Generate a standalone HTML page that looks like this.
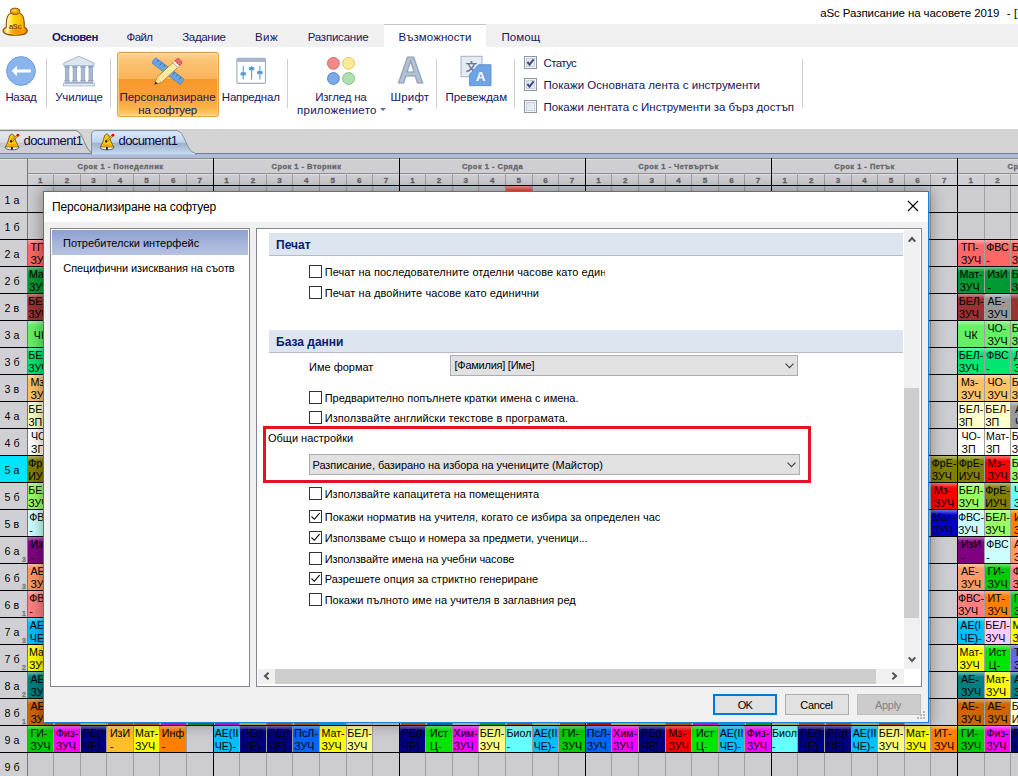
<!DOCTYPE html>
<html lang="bg"><head><meta charset="utf-8"><title>aSc Разписание на часовете 2019</title>
<style>
*{box-sizing:border-box;margin:0;padding:0}
html,body{width:1018px;height:776px;overflow:hidden;background:#fff}
body{position:relative;font-family:"Liberation Sans",sans-serif;font-size:11px;color:#000}
.a{position:absolute}
.t{position:absolute;white-space:nowrap;line-height:1}
/* ribbon */
#tabstrip{left:0;top:24px;width:1018px;height:23px;background:#f0f0f0}
#acttab{left:384px;top:24px;width:102px;height:23px;background:#fff;border-top:1px solid #c4c4c4}
.rt{position:absolute;top:31px;font-size:11.5px;color:#18185e;white-space:nowrap;line-height:13px}
.rl{position:absolute;font-size:11.5px;color:#16165c;white-space:nowrap;line-height:13px;text-align:center}
.sep{position:absolute;top:59px;width:1px;height:49px;background:#cdcdcd}
.rcb{position:absolute;left:524px;width:13px;height:13px;border:1px solid #8a97ab;background:linear-gradient(135deg,#d9dee8,#f6f7fa);box-shadow:inset 0 0 0 1px #f4f5f8,inset 0 0 0 2px #c9d0dc}
/* doc tabs */
#docbar{left:0;top:129px;width:1018px;height:29px;background:#d4d4d4}
/* grid */
#grid{left:0;top:158px;width:1018px;height:618px;background:#cdcdd1;overflow:hidden}
.hl{position:absolute;left:0;width:1018px;height:1px;background:#000}
.vl{position:absolute;top:15px;width:1px;height:603px;background:#a0a0a0}
.vd{position:absolute;top:0;width:1px;height:618px;background:#000}
.rh{position:absolute;left:0;width:27px;height:26px;overflow:hidden;background:#d0d0d4;font-size:10.67px;line-height:28px;padding-left:4.6px;white-space:nowrap;color:#000}
.rh i{position:absolute;right:1px;bottom:0;font-style:normal;font-size:7px;line-height:7px;color:#77777b;font-weight:bold;-webkit-text-stroke:.3px #77777b}
.c{position:absolute;height:26px;font-size:10.67px;line-height:13px;text-align:center;white-space:nowrap;overflow:hidden;color:#000;padding-top:1px}
.c span{display:inline-block;text-align:left}
.dn{position:absolute;top:4px;font-size:7.5px;font-weight:bold;color:#68686c;-webkit-text-stroke:.35px #68686c;white-space:nowrap;line-height:9px;text-align:center;width:187px}
.pn{position:absolute;top:19px;font-size:8px;font-weight:bold;color:#66666a;-webkit-text-stroke:.35px #66666a;white-space:nowrap;line-height:8px;text-align:center;width:26px}
/* dialog */
#dlg{left:43px;top:191px;width:886px;height:532px;background:#f0f0f0;border:1px solid #1883d7;box-shadow:0 0 14px 2px rgba(0,0,0,.32)}
#dtitle{left:0;top:0;width:884px;height:30px;background:#fff}
.pane{position:absolute;background:#fff;border:1px solid #828790}
.sh{position:absolute;left:269px;width:634px;height:23px;background:#dde6f0;border-bottom:1px solid #b8bcc2;font-weight:bold;color:#0c1a6b;font-size:12px;line-height:24px;padding-left:7px;white-space:nowrap}
.cb{position:absolute;left:309px;width:13px;height:13px;border:1px solid #333;background:#fff}
.cl{position:absolute;left:324.7px;font-size:11px;line-height:13px;white-space:nowrap;color:#000}
.combo{position:absolute;height:21px;background:#e1e1e1;border:1px solid #adadad;font-size:11px;line-height:19px;padding-left:3px;white-space:nowrap}
.btn{position:absolute;top:694px;width:64px;height:21px;background:#e1e1e1;border:1px solid #adadad;font-size:12px;line-height:19px;text-align:center}
</style></head><body>

<div class="t" style="left:820.2px;top:7px;font-size:11.5px;line-height:13px;color:#000;letter-spacing:-0.087px;">aSc Разписание на часовете 2019</div>
<div class="t" style="left:1006.7px;top:7px;font-size:11.5px;line-height:13px;color:#000;letter-spacing:0.127px;">- [</div>
<div class="a" id="tabstrip"></div><div class="a" id="acttab"></div>
<svg class="a" style="left:0;top:0" width="32" height="40" viewBox="0 0 32 40">
<defs><linearGradient id="bg1" x1="0" y1="0" x2="1" y2="0"><stop offset="0" stop-color="#e8a000"/><stop offset=".18" stop-color="#fff6c0"/><stop offset=".45" stop-color="#ffd800"/><stop offset=".8" stop-color="#ffb400"/><stop offset="1" stop-color="#d88400"/></linearGradient>
<radialGradient id="bg2" cx="55%" cy="60%" r="55%"><stop offset="0" stop-color="#ff8a00"/><stop offset=".5" stop-color="#ff9400" stop-opacity=".8"/><stop offset="1" stop-color="#ff9000" stop-opacity="0"/></radialGradient></defs>
<path d="M6.3 27.2C6.3 20 6 12.3 15.2 12C24.5 12.3 24.3 20 24.3 27.2C26 28 27.3 29.5 27.3 31C27.3 33.6 22 35.3 15.2 35.3C8.4 35.3 3 33.6 3 31C3 29.5 4.5 28 6.3 27.2Z" fill="url(#bg1)" stroke="#8e4e00" stroke-width="1.1"/>
<ellipse cx="16.5" cy="30.8" rx="9.5" ry="4" fill="url(#bg2)"/>
<ellipse cx="15.1" cy="11.3" rx="4.7" ry="3.1" fill="#e8a200" stroke="#8e4e00" stroke-width="1"/><ellipse cx="14.6" cy="10.6" rx="2.6" ry="1.3" fill="#ffd23a"/>
<text x="15.2" y="28.6" font-size="7.5" font-weight="bold" font-family="'Liberation Sans',sans-serif" fill="#8a4a00" text-anchor="middle" letter-spacing="-.3">aSc</text>
</svg>
<div class="rt" style="left:52.0px;font-weight:bold;letter-spacing:-0.539px;">Основен</div>
<div class="rt" style="left:126.6px;letter-spacing:-0.618px;">Файл</div>
<div class="rt" style="left:182.2px;letter-spacing:-0.317px;">Задание</div>
<div class="rt" style="left:255.0px;letter-spacing:0.404px;">Виж</div>
<div class="rt" style="left:307.7px;letter-spacing:-0.210px;">Разписание</div>
<div class="rt" style="left:398.5px;letter-spacing:0.065px;">Възможности</div>
<div class="rt" style="left:501.4px;letter-spacing:0.095px;">Помощ</div>
<svg class="a" style="left:6px;top:56px" width="30" height="30" viewBox="0 0 30 30"><circle cx="15" cy="15" r="14.4" fill="#8ab4ec" stroke="#6b9de0" stroke-width="1"/><path d="M5.7 15L10.9 9.8V13.6H24.8V16.4H10.9V20.2Z" fill="#fff"/></svg>
<div class="rl" style="left:5.5px;top:91px;text-align:left;letter-spacing:-0.430px;">Назад</div>
<div class="sep" style="left:46px"></div>
<svg class="a" style="left:62px;top:55px" width="34" height="32" viewBox="0 0 34 32">
<path d="M16.9 1.2L1.8 8v2.6h30.2V8z" fill="#dde5ef" stroke="#9fb0c8" stroke-width=".9"/><rect x="2.4" y="11" width="5.4" height="1.6" fill="#93a4c0"/><rect x="3.3" y="12.6" width="3.6" height="12.6" fill="#aab8cf" stroke="#8c9dba" stroke-width=".7"/><rect x="2.4" y="25" width="5.4" height="1.6" fill="#93a4c0"/><rect x="10.2" y="11" width="5.4" height="1.6" fill="#93a4c0"/><rect x="11.1" y="12.6" width="3.6" height="12.6" fill="#aab8cf" stroke="#8c9dba" stroke-width=".7"/><rect x="10.2" y="25" width="5.4" height="1.6" fill="#93a4c0"/><rect x="18.3" y="11" width="5.4" height="1.6" fill="#93a4c0"/><rect x="19.2" y="12.6" width="3.6" height="12.6" fill="#aab8cf" stroke="#8c9dba" stroke-width=".7"/><rect x="18.3" y="25" width="5.4" height="1.6" fill="#93a4c0"/><rect x="26.1" y="11" width="5.4" height="1.6" fill="#93a4c0"/><rect x="27.0" y="12.6" width="3.6" height="12.6" fill="#aab8cf" stroke="#8c9dba" stroke-width=".7"/><rect x="26.1" y="25" width="5.4" height="1.6" fill="#93a4c0"/>
<rect x="2.6" y="26.8" width="28.6" height="1.3" fill="#9aabc6"/><rect x="1.4" y="28.3" width="31.2" height="2.6" fill="#e3e9f1" stroke="#a3b2ca" stroke-width=".8"/></svg>
<div class="rl" style="left:55.2px;top:91px;text-align:left;letter-spacing:-0.140px;">Училище</div>
<div class="sep" style="left:110px"></div>
<div class="a" style="left:117px;top:52px;width:102px;height:65px;border:1px solid #eba136;border-top-color:#cf9a4a;border-radius:3px;background:linear-gradient(#fdd59a 0,#fcc373 12%,#fbb45a 41%,#f9982c 42%,#fa9f36 70%,#fcb850 90%,#fdd377 100%);box-shadow:inset 0 0 0 1px rgba(255,235,180,.5)"></div>
<svg class="a" style="left:152px;top:55px" width="32" height="32" viewBox="0 0 32 32">
<g transform="rotate(37 16 16)"><rect x="-2" y="12.8" width="36" height="6.6" rx=".8" fill="#6aa2e4" stroke="#4a86d0" stroke-width=".8"/><path d="M2 12.8v2.4M6 12.8v3.4M10 12.8v2.4M14 12.8v3.4M18 12.8v2.4M22 12.8v3.4M26 12.8v2.4M30 12.8v3.4" stroke="#2f62a8" stroke-width=".8"/></g>
<g transform="rotate(-43 16 16)"><path d="M-3 16.6l6.5-3.4h22v6.8h-22z" fill="#fde9a2" stroke="#a8802c" stroke-width=".8"/><path d="M-3 16.6l3-1.6v3.2z" fill="#333"/><path d="M3.5 13.2v6.8" stroke="#c9a64c" stroke-width=".6"/><rect x="25.5" y="13.2" width="2.6" height="6.8" fill="#f2f2f2" stroke="#a8a8a8" stroke-width=".5"/><path d="M28.1 13.2h2.4a2 2 0 0 1 2 2v2.8a2 2 0 0 1-2 2h-2.4z" fill="#f06a66" stroke="#c04440" stroke-width=".7"/></g></svg>
<div class="rl" style="left:119.5px;top:91px;text-align:left;letter-spacing:-0.030px;">Персонализиране</div>
<div class="rl" style="left:138.3px;top:104px;text-align:left;letter-spacing:-0.253px;">на софтуер</div>
<svg class="a" style="left:236px;top:57px" width="31" height="28" viewBox="0 0 31 28">
<rect x=".9" y="1.4" width="28.6" height="25" rx="1.2" fill="#fff" stroke="#9eabc2" stroke-width="1.1"/><path d="M1 2.2a.9.9 0 0 1 .9-.9h26.6a.9.9 0 0 1 .9.9V5H1z" fill="#a9b5c9"/>
<g stroke="#5b9bd5" stroke-width="1.1" fill="#5b9bd5"><path d="M7.2 9v13.4M15.6 9v13.4M23.9 9v13.4"/><rect x="5" y="15.8" width="4.4" height="2.2" rx=".6"/><rect x="13.4" y="10.6" width="4.4" height="2.2" rx=".6"/><rect x="21.7" y="14.6" width="4.4" height="2.2" rx=".6"/></g></svg>
<div class="rl" style="left:221.8px;top:91px;text-align:left;letter-spacing:-0.193px;">Напреднал</div>
<div class="sep" style="left:287px"></div>
<svg class="a" style="left:326px;top:56px" width="30" height="30" viewBox="0 0 30 30">
<circle cx="7.4" cy="7.3" r="5.9" fill="#f28a8a" stroke="#e26464" stroke-width="1"/><circle cx="22.6" cy="7.3" r="5.9" fill="#fde99a" stroke="#e3c558" stroke-width="1"/>
<circle cx="7.4" cy="22.5" r="5.9" fill="#7aaae8" stroke="#5486d0" stroke-width="1"/><circle cx="22.6" cy="22.5" r="5.9" fill="#b2dfb0" stroke="#88c184" stroke-width="1"/></svg>
<div class="rl" style="left:315.2px;top:91px;text-align:left;letter-spacing:-0.176px;">Изглед на</div>
<div class="rl" style="left:297.0px;top:104px;text-align:left;letter-spacing:0.261px;">приложението</div>
<div class="a" style="left:380px;top:108px;width:0;height:0;border-left:3px solid transparent;border-right:3px solid transparent;border-top:3.5px solid #5a6f9a"></div>
<div class="t" style="left:397.5px;top:52.5px;font-size:36px;line-height:36px;font-weight:bold;color:#b4c1d4;-webkit-text-stroke:1.1px #8c9db8">A</div>
<div class="rl" style="left:390.4px;top:91px;text-align:left;letter-spacing:0.213px;">Шрифт</div>
<div class="a" style="left:407px;top:108px;width:0;height:0;border-left:3px solid transparent;border-right:3px solid transparent;border-top:3.5px solid #5a6f9a"></div>
<div class="sep" style="left:436px"></div>
<svg class="a" style="left:460px;top:55px" width="32" height="32" viewBox="0 0 32 32">
<rect x="1" y="1.3" width="21" height="20.4" fill="#e6ebf2" stroke="#a3b1c7" stroke-width="1"/>
<text x="11.3" y="15.8" font-size="11.5" font-weight="bold" font-family="'Noto Sans CJK SC','Noto Sans CJK JP','WenQuanYi Zen Hei',sans-serif" fill="#66789a" text-anchor="middle">文</text>
<path d="M18.6 9.7H31V30.7H9.6V19.6Z" fill="#6ea3e6" stroke="#598ed4" stroke-width=".9"/>
<text x="20.7" y="26.3" font-size="13.5" font-weight="bold" font-family="'Liberation Sans',sans-serif" fill="#fff" text-anchor="middle">A</text></svg>
<div class="rl" style="left:445.5px;top:91px;text-align:left;letter-spacing:-0.057px;">Превеждам</div>
<div class="sep" style="left:514px"></div>
<div class="rcb" style="top:56px"><svg width="11" height="11" viewBox="0 0 11 11" style="position:absolute;left:0;top:0"><path d="M2.4 5l2.2 2.6L8.6 2.4" fill="none" stroke="#3a4b86" stroke-width="2"/></svg></div>
<div class="rl" style="left:543.5px;top:57px;text-align:left;letter-spacing:-0.642px;">Статус</div>
<div class="rcb" style="top:78px"><svg width="11" height="11" viewBox="0 0 11 11" style="position:absolute;left:0;top:0"><path d="M2.4 5l2.2 2.6L8.6 2.4" fill="none" stroke="#3a4b86" stroke-width="2"/></svg></div>
<div class="rl" style="left:543.5px;top:79px;text-align:left;letter-spacing:0.026px;">Покажи Основната лента с инструменти</div>
<div class="rcb" style="top:100px"></div>
<div class="rl" style="left:543.5px;top:101px;text-align:left;letter-spacing:-0.027px;">Покажи лентата с Инструменти за бърз достъп</div>
<div class="sep" style="left:802px"></div>
<div class="a" id="docbar"></div>
<svg class="a" style="left:0;top:129px" width="1018" height="29" viewBox="0 0 1018 29">
<defs><linearGradient id="tg1" x1="0" y1="0" x2="0" y2="1"><stop offset="0" stop-color="#e6e7ea"/><stop offset=".5" stop-color="#dcdde1"/><stop offset=".54" stop-color="#c5c8ce"/><stop offset="1" stop-color="#d0d2d7"/></linearGradient>
<linearGradient id="tg2" x1="0" y1="0" x2="0" y2="1"><stop offset="0" stop-color="#dcebfc"/><stop offset=".48" stop-color="#bdd4ef"/><stop offset=".53" stop-color="#9fb1c7"/><stop offset="1" stop-color="#c4dbf3"/></linearGradient></defs>
<rect x="0" y="25" width="1018" height="4" fill="#adbbd9"/>
<rect x="0" y="24" width="1018" height="1" fill="#7a7a7c"/>
<path d="M-5 24.5V1.6H76C83 2.5 85 22 93 24.5Z" fill="url(#tg1)" stroke="#808080" stroke-width="1"/>
<path d="M91.5 25.5V6Q91.5 1.6 96 1.6H177C185 2.6 186 22.5 195.5 24.6L196 25.5Z" fill="url(#tg2)" stroke="#7f90a8" stroke-width="1"/>
<rect x="92" y="24.2" width="103" height="1.6" fill="#c4dbf3"/>
</svg>
<svg class="a" style="left:4px;top:133px" width="17" height="18" viewBox="0 0 17 18"><ellipse cx="8" cy="14.5" rx="6.9" ry="2.3" fill="#f6f6f6" stroke="#3a3a3a" stroke-width=".8"/><path d="M7.8 1C6.5 1 5.6 2.5 5.1 4.5C4.3 7.6 3.5 10.6 1.4 13.9H14.8C12.7 10.6 11.5 7.6 10.6 4.5C10.1 2.5 9.1 1 7.8 1Z" fill="#ffc800" stroke="#55482a" stroke-width=".8"/><path d="M3.2 13.4H12.9L11.8 11H4.4Z" fill="#ffa600"/><rect x="7" y="14" width="1.8" height="2.5" fill="#111"/><path d="M7.4 8.2L13.6 2.5" stroke="#6a5200" stroke-width="2.2"/><path d="M7.6 8L13.6 2.5" stroke="#e8c030" stroke-width="1.2"/><circle cx="7.1" cy="8.4" r="1.1" fill="#111"/><circle cx="14" cy="2.2" r="1.35" fill="#f00000"/></svg>
<svg class="a" style="left:99px;top:133px" width="17" height="18" viewBox="0 0 17 18"><ellipse cx="8" cy="14.5" rx="6.9" ry="2.3" fill="#f6f6f6" stroke="#3a3a3a" stroke-width=".8"/><path d="M7.8 1C6.5 1 5.6 2.5 5.1 4.5C4.3 7.6 3.5 10.6 1.4 13.9H14.8C12.7 10.6 11.5 7.6 10.6 4.5C10.1 2.5 9.1 1 7.8 1Z" fill="#ffc800" stroke="#55482a" stroke-width=".8"/><path d="M3.2 13.4H12.9L11.8 11H4.4Z" fill="#ffa600"/><rect x="7" y="14" width="1.8" height="2.5" fill="#111"/><path d="M7.4 8.2L13.6 2.5" stroke="#6a5200" stroke-width="2.2"/><path d="M7.6 8L13.6 2.5" stroke="#e8c030" stroke-width="1.2"/><circle cx="7.1" cy="8.4" r="1.1" fill="#111"/><circle cx="14" cy="2.2" r="1.35" fill="#f00000"/></svg>
<div class="t" style="left:23.5px;top:134px;font-size:13px;line-height:14px;color:#0c0c48;letter-spacing:-0.591px;">document1</div>
<div class="t" style="left:118.5px;top:134px;font-size:13px;line-height:14px;color:#0c0c48;letter-spacing:-0.591px;">document1</div>
<div class="a" id="grid">
<div class="a" style="left:0;top:0;width:1018px;height:27px;background:#cfcfd3"></div>
<div class="a" style="left:0;top:0;width:27px;height:27px;background:#d2d2d6"></div>
<div class="a" style="left:0;top:0;width:1018px;height:1px;background:#8c8c8c"></div>
<div class="a" style="left:27px;top:15px;width:991px;height:1px;background:#8c8c8c"></div>
<div class="a" style="left:0;top:1px;width:1018px;height:1px;background:rgba(255,255,255,.35)"></div>
<div class="a" style="left:28px;top:16px;width:990px;height:1px;background:rgba(255,255,255,.35)"></div>
<div class="dn" style="left:27px;letter-spacing:0.499px;">Срок 1 - Понеделник</div>
<div class="pn" style="left:27.3px">1</div>
<div class="pn" style="left:53.9px">2</div>
<div class="pn" style="left:80.5px">3</div>
<div class="pn" style="left:107.1px">4</div>
<div class="pn" style="left:133.6px">5</div>
<div class="pn" style="left:160.2px">6</div>
<div class="pn" style="left:186.8px">7</div>
<div class="dn" style="left:213px;letter-spacing:0.482px;">Срок 1 - Вторник</div>
<div class="pn" style="left:213.4px">1</div>
<div class="pn" style="left:240.0px">2</div>
<div class="pn" style="left:266.6px">3</div>
<div class="pn" style="left:293.2px">4</div>
<div class="pn" style="left:319.7px">5</div>
<div class="pn" style="left:346.3px">6</div>
<div class="pn" style="left:372.9px">7</div>
<div class="dn" style="left:399px;letter-spacing:0.482px;">Срок 1 - Сряда</div>
<div class="pn" style="left:399.5px">1</div>
<div class="pn" style="left:426.1px">2</div>
<div class="pn" style="left:452.7px">3</div>
<div class="pn" style="left:479.3px">4</div>
<div class="pn" style="left:505.8px">5</div>
<div class="pn" style="left:532.4px">6</div>
<div class="pn" style="left:559.0px">7</div>
<div class="dn" style="left:585px;letter-spacing:0.493px;">Срок 1 - Четвъртък</div>
<div class="pn" style="left:585.6px">1</div>
<div class="pn" style="left:612.2px">2</div>
<div class="pn" style="left:638.8px">3</div>
<div class="pn" style="left:665.4px">4</div>
<div class="pn" style="left:691.9px">5</div>
<div class="pn" style="left:718.5px">6</div>
<div class="pn" style="left:745.1px">7</div>
<div class="dn" style="left:771px;letter-spacing:0.475px;">Срок 1 - Петък</div>
<div class="pn" style="left:771.7px">1</div>
<div class="pn" style="left:798.3px">2</div>
<div class="pn" style="left:824.9px">3</div>
<div class="pn" style="left:851.5px">4</div>
<div class="pn" style="left:878.1px">5</div>
<div class="pn" style="left:904.6px">6</div>
<div class="pn" style="left:931.2px">7</div>
<div class="dn" style="left:957px;letter-spacing:0.499px;">Срок 2 - Понеделник</div>
<div class="pn" style="left:957.8px">1</div>
<div class="pn" style="left:984.4px">2</div>
<div class="pn" style="left:1011.0px">3</div>
<div class="rh" style="top:28px;">1 а</div>
<div class="rh" style="top:55px;">1 б</div>
<div class="rh" style="top:82px;">2 а</div>
<div class="rh" style="top:109px;">2 б</div>
<div class="rh" style="top:136px;">2 в</div>
<div class="rh" style="top:163px;">3 а</div>
<div class="rh" style="top:190px;">3 б</div>
<div class="rh" style="top:217px;">3 в</div>
<div class="rh" style="top:244px;">4 а</div>
<div class="rh" style="top:271px;">4 б</div>
<div class="rh" style="top:298px;background:#00e5ff;">5 а</div>
<div class="rh" style="top:325px;">5 б</div>
<div class="rh" style="top:352px;">5 в</div>
<div class="rh" style="top:379px;">6 а<i>3</i></div>
<div class="rh" style="top:406px;">6 б<i>3</i></div>
<div class="rh" style="top:433px;">6 в<i>1</i></div>
<div class="rh" style="top:460px;">7 а<i>3</i></div>
<div class="rh" style="top:487px;">7 б<i>2</i></div>
<div class="rh" style="top:514px;">8 а<i>2</i></div>
<div class="rh" style="top:541px;">8 б<i>1</i></div>
<div class="rh" style="top:568px;">9 а</div>
<div class="rh" style="top:595px;">9 б</div>
<div class="c" style="left:28px;top:82px;width:25px;background:linear-gradient(#ffaaaa 0,#ff6666 5px);"><span>ТП-<br>ЗУЧ</span></div>
<div class="c" style="left:28px;top:109px;width:25px;background:linear-gradient(#72c68e 0,#009933 5px);"><span>Мат-<br>ЗУЧ</span></div>
<div class="c" style="left:28px;top:136px;width:25px;background:linear-gradient(#c68e8e 0,#993333 5px);"><span>БЕЛ-<br>ЗУЧ</span></div>
<div class="c" style="left:28px;top:163px;width:25px;background:linear-gradient(#aaf6aa 0,#66f066 5px);line-height:27px;"><span>ЧК</span></div>
<div class="c" style="left:28px;top:190px;width:25px;background:linear-gradient(#72f1b2 0,#00e673 5px);"><span>БЕЛ-<br>ЗУЧ</span></div>
<div class="c" style="left:28px;top:217px;width:25px;background:linear-gradient(#ffddaa 0,#ffc266 5px);"><span>Мз-<br>ЗУЧ</span></div>
<div class="c" style="left:28px;top:244px;width:25px;background:linear-gradient(#ffffe2 0,#ffffcc 5px);"><span>БЕЛ-<br>ЗП</span></div>
<div class="c" style="left:28px;top:271px;width:25px;background:#fff;"><span>ЧО-<br>ЗП</span></div>
<div class="c" style="left:28px;top:298px;width:25px;background:linear-gradient(#b9b972 0,#808000 5px);"><span>ФрЕ-<br>ИУЧ</span></div>
<div class="c" style="left:28px;top:325px;width:25px;background:linear-gradient(#c6ffaa 0,#99ff66 5px);"><span>БЕЛ-<br>ЗУЧ</span></div>
<div class="c" style="left:28px;top:352px;width:25px;background:linear-gradient(#e2ffff 0,#ccffff 5px);"><span>ФВС<br>-</span></div>
<div class="c" style="left:28px;top:379px;width:25px;background:linear-gradient(#b972b9 0,#800080 5px);"><span>ИзИ<br>-</span></div>
<div class="c" style="left:28px;top:406px;width:25px;background:linear-gradient(#ffc6aa 0,#ff9966 5px);"><span>АЕ-<br>ЗУЧ</span></div>
<div class="c" style="left:28px;top:433px;width:25px;background:linear-gradient(#ffb9b9 0,#ff8080 5px);"><span>ФВС<br>-</span></div>
<div class="c" style="left:28px;top:460px;width:25px;background:linear-gradient(#72dbff 0,#00bfff 5px);"><span>АЕ(I<br>ЧЕ)-</span></div>
<div class="c" style="left:28px;top:487px;width:25px;background:linear-gradient(#ffff72 0,#ffff00 5px);"><span>Мат-<br>ЗУЧ</span></div>
<div class="c" style="left:28px;top:514px;width:25px;background:linear-gradient(#72b9b9 0,#008080 5px);"><span>АЕ-<br>ЗУЧ</span></div>
<div class="c" style="left:28px;top:541px;width:25px;background:linear-gradient(#e2aa72 0,#cc6600 5px);"><span>АЕ-<br>ЗУЧ</span></div>
<div class="c" style="left:506px;top:28px;width:26px;background:linear-gradient(#f79898 0,#f24444 5px);line-height:27px;"><span></span></div>
<div class="c" style="left:931px;top:298px;width:26px;background:linear-gradient(#b9b972 0,#808000 5px);"><span>ФрЕ-<br>ЗУЧ</span></div>
<div class="c" style="left:931px;top:325px;width:26px;background:linear-gradient(#ff7272 0,#ff0000 5px);"><span>Мз-<br>ЗУЧ</span></div>
<div class="c" style="left:931px;top:352px;width:26px;background:linear-gradient(#7272e2 0,#0000cc 5px);"><span>Мат-<br>ЗУЧ</span></div>
<div class="c" style="left:958px;top:82px;width:26px;background:linear-gradient(#ffaaaa 0,#ff6666 5px);"><span>ТП-<br>ЗУЧ</span></div>
<div class="c" style="left:985px;top:82px;width:25px;background:linear-gradient(#ffaaaa 0,#ff6666 5px);"><span>ФВС<br>-</span></div>
<div class="c" style="left:1011px;top:82px;width:26px;background:linear-gradient(#ffaaaa 0,#ff6666 5px);"><span>БЕЛ-<br>ЗУЧ</span></div>
<div class="c" style="left:958px;top:109px;width:26px;background:linear-gradient(#72c68e 0,#009933 5px);"><span>Мат-<br>ЗУЧ</span></div>
<div class="c" style="left:985px;top:109px;width:25px;background:linear-gradient(#72c68e 0,#009933 5px);"><span>ИзИ<br>-</span></div>
<div class="c" style="left:1011px;top:109px;width:26px;background:linear-gradient(#72c68e 0,#009933 5px);"><span>БЕЛ-<br>ЗУЧ</span></div>
<div class="c" style="left:958px;top:136px;width:26px;background:linear-gradient(#c68e8e 0,#993333 5px);"><span>БЕЛ-<br>ЗУЧ</span></div>
<div class="c" style="left:985px;top:136px;width:25px;background:linear-gradient(#c6c6c6 0,#999999 5px);"><span>АЕ-<br>ЗУЧ</span></div>
<div class="c" style="left:1011px;top:136px;width:26px;background:linear-gradient(#c68e8e 0,#993333 5px);line-height:27px;"><span>ЧК</span></div>
<div class="c" style="left:958px;top:163px;width:26px;background:linear-gradient(#aaf6aa 0,#66f066 5px);line-height:27px;"><span>ЧК</span></div>
<div class="c" style="left:985px;top:163px;width:25px;background:linear-gradient(#aaf6aa 0,#66f066 5px);"><span>ЧО-<br>ЗУЧ</span></div>
<div class="c" style="left:1011px;top:163px;width:26px;background:linear-gradient(#aaf6aa 0,#66f066 5px);"><span>БЕЛ-<br>ЗУЧ</span></div>
<div class="c" style="left:958px;top:190px;width:26px;background:linear-gradient(#72f1b2 0,#00e673 5px);"><span>БЕЛ-<br>ЗУЧ</span></div>
<div class="c" style="left:985px;top:190px;width:25px;background:linear-gradient(#72f1b2 0,#00e673 5px);"><span>ФВС<br>-</span></div>
<div class="c" style="left:1011px;top:190px;width:26px;background:linear-gradient(#72f1b2 0,#00e673 5px);"><span>ДБТ<br>ЗУЧ</span></div>
<div class="c" style="left:958px;top:217px;width:26px;background:linear-gradient(#ffddaa 0,#ffc266 5px);"><span>Мз-<br>ЗУЧ</span></div>
<div class="c" style="left:985px;top:217px;width:25px;background:linear-gradient(#ffddaa 0,#ffc266 5px);"><span>ЧО-<br>ЗУЧ</span></div>
<div class="c" style="left:1011px;top:217px;width:26px;background:linear-gradient(#ffddaa 0,#ffc266 5px);"><span>БЕЛ-<br>ЗУЧ</span></div>
<div class="c" style="left:958px;top:244px;width:26px;background:linear-gradient(#ffffe2 0,#ffffcc 5px);"><span>БЕЛ-<br>ЗП</span></div>
<div class="c" style="left:985px;top:244px;width:25px;background:linear-gradient(#ffffe2 0,#ffffcc 5px);"><span>БЕЛ-<br>ЗП</span></div>
<div class="c" style="left:1011px;top:244px;width:26px;background:linear-gradient(#c6c6c6 0,#999999 5px);"><span>АЕ-<br>ЧЕ</span></div>
<div class="c" style="left:958px;top:271px;width:26px;background:#fff;"><span>ЧО-<br>ЗП</span></div>
<div class="c" style="left:985px;top:271px;width:25px;background:#fff;"><span>Мат-<br>ЗП</span></div>
<div class="c" style="left:1011px;top:271px;width:26px;background:#fff;"><span>БЕЛ-<br>ЗП</span></div>
<div class="c" style="left:958px;top:298px;width:26px;background:linear-gradient(#b9b972 0,#808000 5px);"><span>ФрЕ-<br>ИУЧ</span></div>
<div class="c" style="left:985px;top:298px;width:25px;background:linear-gradient(#ff7272 0,#ff0000 5px);"><span>Мз-<br>ЗУЧ</span></div>
<div class="c" style="left:1011px;top:298px;width:26px;background:linear-gradient(#c6ffaa 0,#99ff66 5px);"><span>БЕЛ-<br>ЗУЧ</span></div>
<div class="c" style="left:958px;top:325px;width:26px;background:linear-gradient(#c6ffaa 0,#99ff66 5px);"><span>БЕЛ-<br>ЗУЧ</span></div>
<div class="c" style="left:985px;top:325px;width:25px;background:linear-gradient(#b9b972 0,#808000 5px);"><span>ФрЕ-<br>ИУЧ</span></div>
<div class="c" style="left:1011px;top:325px;width:26px;background:linear-gradient(#aaffff 0,#66ffff 5px);"><span>ЧО-<br>ЗУЧ</span></div>
<div class="c" style="left:958px;top:352px;width:26px;background:linear-gradient(#e2ffff 0,#ccffff 5px);"><span>ФВС-<br>ЗУЧ</span></div>
<div class="c" style="left:985px;top:352px;width:25px;background:linear-gradient(#c6ffaa 0,#99ff66 5px);"><span>БЕЛ-<br>ЗУЧ</span></div>
<div class="c" style="left:1011px;top:352px;width:26px;background:linear-gradient(#ffb972 0,#ff8000 5px);"><span>ИзИ<br>ЗУЧ</span></div>
<div class="c" style="left:958px;top:379px;width:26px;background:linear-gradient(#b972b9 0,#800080 5px);"><span>ИзИ<br>-</span></div>
<div class="c" style="left:985px;top:379px;width:25px;background:linear-gradient(#e2ffff 0,#ccffff 5px);"><span>ФВС<br>-</span></div>
<div class="c" style="left:1011px;top:379px;width:26px;background:linear-gradient(#ffc6aa 0,#ff9966 5px);"><span>АЕ-<br>ЗУЧ</span></div>
<div class="c" style="left:958px;top:406px;width:26px;background:linear-gradient(#ffc6aa 0,#ff9966 5px);"><span>АЕ-<br>ЗУЧ</span></div>
<div class="c" style="left:985px;top:406px;width:25px;background:linear-gradient(#72e272 0,#00cc00 5px);"><span>ГИ-<br>ЗУЧ</span></div>
<div class="c" style="left:1011px;top:406px;width:26px;background:linear-gradient(#ffb9b9 0,#ff8080 5px);"><span>ФВС<br>ЗУЧ</span></div>
<div class="c" style="left:958px;top:433px;width:26px;background:linear-gradient(#ffb9b9 0,#ff8080 5px);"><span>ФВС-<br>ЗУЧ</span></div>
<div class="c" style="left:985px;top:433px;width:25px;background:linear-gradient(#ffb972 0,#ff8000 5px);"><span>ИТ-<br>ЗУЧ</span></div>
<div class="c" style="left:1011px;top:433px;width:26px;background:linear-gradient(#72e272 0,#00cc00 5px);"><span>ГИ-<br>ЗУЧ</span></div>
<div class="c" style="left:958px;top:460px;width:26px;background:linear-gradient(#72dbff 0,#00bfff 5px);"><span>АЕ(I<br>ЧЕ)-</span></div>
<div class="c" style="left:985px;top:460px;width:25px;background:linear-gradient(#ffe2ff 0,#ffccff 5px);"><span>БЕЛ-<br>ЗУЧ</span></div>
<div class="c" style="left:1011px;top:460px;width:26px;background:linear-gradient(#ffff72 0,#ffff00 5px);"><span>Мат-<br>ЗУЧ</span></div>
<div class="c" style="left:958px;top:487px;width:26px;background:linear-gradient(#ffff72 0,#ffff00 5px);"><span>Мат-<br>ЗУЧ</span></div>
<div class="c" style="left:985px;top:487px;width:25px;background:linear-gradient(#72f172 0,#00e600 5px);"><span>Ист<br>Ц-</span></div>
<div class="c" style="left:1011px;top:487px;width:26px;background:linear-gradient(#a9a9f3 0,#6464ea 5px);"><span>ТП-<br>ЗУЧ</span></div>
<div class="c" style="left:958px;top:514px;width:26px;background:linear-gradient(#72b9b9 0,#008080 5px);"><span>АЕ-<br>ЗУЧ</span></div>
<div class="c" style="left:985px;top:514px;width:25px;background:linear-gradient(#ffff72 0,#ffff00 5px);"><span>Мат-<br>ЗУЧ</span></div>
<div class="c" style="left:1011px;top:514px;width:26px;background:linear-gradient(#72b9b9 0,#008080 5px);"><span>АЕ-<br>ЗУЧ</span></div>
<div class="c" style="left:958px;top:541px;width:26px;background:linear-gradient(#e2aa72 0,#cc6600 5px);"><span>АЕ-<br>ЗУЧ</span></div>
<div class="c" style="left:985px;top:541px;width:25px;background:linear-gradient(#e2aa72 0,#cc6600 5px);"><span>АЕ-<br>ЗУЧ</span></div>
<div class="c" style="left:1011px;top:541px;width:26px;background:linear-gradient(#ffffe2 0,#ffffcc 5px);"><span>БЕЛ-<br>ИУЧ</span></div>
<div class="c" style="left:28px;top:568px;width:25px;background:linear-gradient(#72e272 0,#00cc00 5px);"><span>ГИ-<br>ЗУЧ</span></div>
<div class="c" style="left:54px;top:568px;width:26px;background:linear-gradient(#ff72ff 0,#ff00ff 5px);"><span>Физ-<br>ЗУЧ</span></div>
<div class="c" style="left:81px;top:568px;width:25px;background:linear-gradient(#7272b9 0,#000080 5px);"><span>РЕ(I<br>ЧЕ)-</span></div>
<div class="c" style="left:107px;top:568px;width:26px;background:linear-gradient(#ffdb89 0,#ffbf2a 5px);"><span>ИзИ<br>-</span></div>
<div class="c" style="left:134px;top:568px;width:25px;background:linear-gradient(#ffff72 0,#ffff00 5px);"><span>Мат-<br>ЗУЧ</span></div>
<div class="c" style="left:160px;top:568px;width:26px;background:linear-gradient(#ffb972 0,#ff8000 5px);"><span>Инф<br>-</span></div>
<div class="c" style="left:214px;top:568px;width:25px;background:linear-gradient(#72dbff 0,#00bfff 5px);"><span>АЕ(II<br>ЧЕ)-</span></div>
<div class="c" style="left:240px;top:568px;width:26px;background:linear-gradient(#7272b9 0,#000080 5px);"><span>РЕ(I<br>ЧЕ)-</span></div>
<div class="c" style="left:267px;top:568px;width:25px;background:linear-gradient(#7272b9 0,#000080 5px);"><span>РЕ(I<br>ЧЕ)-</span></div>
<div class="c" style="left:293px;top:568px;width:26px;background:linear-gradient(#72aaff 0,#0066ff 5px);"><span>ПсЛ-<br>ЗУЧ</span></div>
<div class="c" style="left:320px;top:568px;width:26px;background:linear-gradient(#ffff72 0,#ffff00 5px);"><span>Мат-<br>ЗУЧ</span></div>
<div class="c" style="left:347px;top:568px;width:25px;background:linear-gradient(#ffffb9 0,#ffff80 5px);"><span>БЕЛ-<br>ЗУЧ</span></div>
<div class="c" style="left:400px;top:568px;width:25px;background:linear-gradient(#7272b9 0,#000080 5px);"><span>РЕ(I<br>ЧЕ)-</span></div>
<div class="c" style="left:426px;top:568px;width:26px;background:linear-gradient(#72f172 0,#00e600 5px);"><span>Ист<br>Ц-</span></div>
<div class="c" style="left:453px;top:568px;width:25px;background:linear-gradient(#ff72ff 0,#ff00ff 5px);"><span>Хим-<br>ЗУЧ</span></div>
<div class="c" style="left:479px;top:568px;width:26px;background:linear-gradient(#ffffb9 0,#ffff80 5px);"><span>БЕЛ-<br>ЗУЧ</span></div>
<div class="c" style="left:506px;top:568px;width:26px;background:linear-gradient(#aaffff 0,#66ffff 5px);"><span>Биол<br>-</span></div>
<div class="c" style="left:533px;top:568px;width:25px;background:linear-gradient(#72dbff 0,#00bfff 5px);"><span>АЕ(II<br>ЧЕ)-</span></div>
<div class="c" style="left:559px;top:568px;width:26px;background:linear-gradient(#72e272 0,#00cc00 5px);"><span>ГИ-<br>ЗУЧ</span></div>
<div class="c" style="left:586px;top:568px;width:25px;background:linear-gradient(#72aaff 0,#0066ff 5px);"><span>ПсЛ-<br>ЗУЧ</span></div>
<div class="c" style="left:612px;top:568px;width:26px;background:linear-gradient(#ff72ff 0,#ff00ff 5px);"><span>Хим-<br>ЗУЧ</span></div>
<div class="c" style="left:639px;top:568px;width:26px;background:linear-gradient(#7272b9 0,#000080 5px);"><span>РЕ(I<br>ЧЕ)-</span></div>
<div class="c" style="left:666px;top:568px;width:25px;background:linear-gradient(#ff7272 0,#ff0000 5px);"><span>Мз-<br>ЗУЧ</span></div>
<div class="c" style="left:692px;top:568px;width:26px;background:linear-gradient(#72f172 0,#00e600 5px);"><span>Ист<br>Ц-</span></div>
<div class="c" style="left:719px;top:568px;width:25px;background:linear-gradient(#72dbff 0,#00bfff 5px);"><span>АЕ(II<br>ЧЕ)-</span></div>
<div class="c" style="left:745px;top:568px;width:26px;background:linear-gradient(#ff72ff 0,#ff00ff 5px);"><span>Физ-<br>ЗУЧ</span></div>
<div class="c" style="left:772px;top:568px;width:25px;background:linear-gradient(#aaffff 0,#66ffff 5px);"><span>Биол<br>-</span></div>
<div class="c" style="left:798px;top:568px;width:26px;background:linear-gradient(#7272b9 0,#000080 5px);"><span>РЕ(I<br>ЧЕ)-</span></div>
<div class="c" style="left:825px;top:568px;width:26px;background:linear-gradient(#7272b9 0,#000080 5px);"><span>РЕ(I<br>ЧЕ)-</span></div>
<div class="c" style="left:852px;top:568px;width:25px;background:linear-gradient(#72dbff 0,#00bfff 5px);"><span>АЕ(II<br>ЧЕ)-</span></div>
<div class="c" style="left:878px;top:568px;width:26px;background:linear-gradient(#ffffb9 0,#ffff80 5px);"><span>БЕЛ-<br>ЗУЧ</span></div>
<div class="c" style="left:905px;top:568px;width:25px;background:linear-gradient(#ffff72 0,#ffff00 5px);"><span>Мат-<br>ЗУЧ</span></div>
<div class="c" style="left:931px;top:568px;width:26px;background:linear-gradient(#ffb972 0,#ff8000 5px);"><span>ИТ-<br>ЗУЧ</span></div>
<div class="c" style="left:958px;top:568px;width:26px;background:linear-gradient(#72e272 0,#00cc00 5px);"><span>ГИ-<br>ЗУЧ</span></div>
<div class="c" style="left:985px;top:568px;width:25px;background:linear-gradient(#ff72ff 0,#ff00ff 5px);"><span>Физ-<br>ЗУЧ</span></div>
<div class="c" style="left:1011px;top:568px;width:26px;background:linear-gradient(#7272b9 0,#000080 5px);"><span>РЕ(I<br>ЧЕ)-</span></div>
<div class="a" style="left:55px;top:541px;width:25px;height:26px;background:#cc6600"></div>
<div class="a" style="left:81px;top:541px;width:26px;height:26px;background:#d6cc3a"></div>
<div class="a" style="left:108px;top:541px;width:25px;height:26px;background:#cc6600"></div>
<div class="a" style="left:134px;top:541px;width:26px;height:26px;background:#cc6600"></div>
<div class="a" style="left:161px;top:541px;width:26px;height:26px;background:#ff00ff"></div>
<div class="a" style="left:188px;top:541px;width:25px;height:26px;background:#00a82a"></div>
<div class="a" style="left:215px;top:541px;width:25px;height:26px;background:#ff00ff"></div>
<div class="a" style="left:241px;top:541px;width:25px;height:26px;background:#d6cc3a"></div>
<div class="a" style="left:267px;top:541px;width:26px;height:26px;background:#cc6600"></div>
<div class="a" style="left:294px;top:541px;width:25px;height:26px;background:#cc6600"></div>
<div class="a" style="left:320px;top:541px;width:26px;height:26px;background:#00bfff"></div>
<div class="a" style="left:401px;top:541px;width:25px;height:26px;background:#cc6600"></div>
<div class="a" style="left:427px;top:541px;width:25px;height:26px;background:#0080d0"></div>
<div class="a" style="left:480px;top:541px;width:26px;height:26px;background:#00cc00"></div>
<div class="a" style="left:507px;top:541px;width:25px;height:26px;background:#cc6600"></div>
<div class="a" style="left:533px;top:541px;width:26px;height:26px;background:#d6cc3a"></div>
<div class="a" style="left:560px;top:541px;width:25px;height:26px;background:#cc6600"></div>
<div class="a" style="left:587px;top:541px;width:25px;height:26px;background:#ff0000"></div>
<div class="a" style="left:613px;top:541px;width:25px;height:26px;background:#d6cc3a"></div>
<div class="a" style="left:639px;top:541px;width:26px;height:26px;background:#d6cc3a"></div>
<div class="a" style="left:666px;top:541px;width:26px;height:26px;background:#cc6600"></div>
<div class="a" style="left:693px;top:541px;width:25px;height:26px;background:#ff00ff"></div>
<div class="a" style="left:719px;top:541px;width:26px;height:26px;background:#00bfff"></div>
<div class="a" style="left:746px;top:541px;width:25px;height:26px;background:#00cc00"></div>
<div class="a" style="left:773px;top:541px;width:25px;height:26px;background:#d6cc3a"></div>
<div class="a" style="left:799px;top:541px;width:26px;height:26px;background:#cc6600"></div>
<div class="a" style="left:826px;top:541px;width:25px;height:26px;background:#cc6600"></div>
<div class="a" style="left:852px;top:541px;width:26px;height:26px;background:#d6cc3a"></div>
<div class="a" style="left:879px;top:541px;width:25px;height:26px;background:#cc6600"></div>
<div class="vl" style="left:27px;top:0;height:618px;background:#777"></div>
<div class="vl" style="left:53px"></div>
<div class="vl" style="left:80px"></div>
<div class="vl" style="left:106px"></div>
<div class="vl" style="left:133px"></div>
<div class="vl" style="left:159px"></div>
<div class="vl" style="left:186px"></div>
<div class="vd" style="left:213px"></div>
<div class="vl" style="left:239px"></div>
<div class="vl" style="left:266px"></div>
<div class="vl" style="left:292px"></div>
<div class="vl" style="left:319px"></div>
<div class="vl" style="left:346px"></div>
<div class="vl" style="left:372px"></div>
<div class="vd" style="left:399px"></div>
<div class="vl" style="left:425px"></div>
<div class="vl" style="left:452px"></div>
<div class="vl" style="left:478px"></div>
<div class="vl" style="left:505px"></div>
<div class="vl" style="left:532px"></div>
<div class="vl" style="left:558px"></div>
<div class="vd" style="left:585px"></div>
<div class="vl" style="left:611px"></div>
<div class="vl" style="left:638px"></div>
<div class="vl" style="left:665px"></div>
<div class="vl" style="left:691px"></div>
<div class="vl" style="left:718px"></div>
<div class="vl" style="left:744px"></div>
<div class="vd" style="left:771px"></div>
<div class="vl" style="left:797px"></div>
<div class="vl" style="left:824px"></div>
<div class="vl" style="left:851px"></div>
<div class="vl" style="left:877px"></div>
<div class="vl" style="left:904px"></div>
<div class="vl" style="left:930px"></div>
<div class="vd" style="left:957px"></div>
<div class="vl" style="left:984px"></div>
<div class="vl" style="left:1010px"></div>
<div class="hl" style="top:27px"></div>
<div class="hl" style="top:54px"></div>
<div class="hl" style="top:81px"></div>
<div class="hl" style="top:108px"></div>
<div class="hl" style="top:135px"></div>
<div class="hl" style="top:162px"></div>
<div class="hl" style="top:189px"></div>
<div class="hl" style="top:216px"></div>
<div class="hl" style="top:243px"></div>
<div class="hl" style="top:270px"></div>
<div class="hl" style="top:297px"></div>
<div class="hl" style="top:324px"></div>
<div class="hl" style="top:351px"></div>
<div class="hl" style="top:378px"></div>
<div class="hl" style="top:405px"></div>
<div class="hl" style="top:432px"></div>
<div class="hl" style="top:459px"></div>
<div class="hl" style="top:486px"></div>
<div class="hl" style="top:513px"></div>
<div class="hl" style="top:540px"></div>
<div class="hl" style="top:567px"></div>
<div class="hl" style="top:594px"></div>
<div class="hl" style="top:621px"></div>
</div>
<div class="a" id="dlg"><div class="a" id="dtitle"></div></div>
<div class="t" style="left:52px;top:200px;font-size:12px;line-height:14px;letter-spacing:-0.149px;">Персонализиране на софтуер</div>
<svg class="a" style="left:907px;top:200px" width="12" height="12" viewBox="0 0 12 12"><path d="M1 1l10 10M11 1L1 11" stroke="#000" stroke-width="1.1" fill="none"/></svg>
<div class="pane" style="left:50px;top:228px;width:200px;height:459px"></div>
<div class="a" style="left:52px;top:230px;width:196px;height:25px;background:linear-gradient(#8e9fd0,#a9b7dc 60%,#b5c1e2)"></div>
<div class="t" style="left:63px;top:237px;font-size:11px;line-height:13px">Потребителски интерфейс</div>
<div class="t" style="left:63.3px;top:262px;font-size:11px;line-height:13px;letter-spacing:-0.082px;">Специфични изисквания на съотв</div>
<div class="pane" style="left:256px;top:228px;width:666px;height:459px"></div>
<div class="sh" style="top:233px">Печат</div>
<div class="sh" style="top:330px">База данни</div>
<div class="cb" style="top:265px"></div><div class="cl" style="top:266px;letter-spacing:0.065px;width:280px;overflow:hidden;">Печат на последователните отделни часове като единични</div>
<div class="cb" style="top:286px"></div><div class="cl" style="top:287px;letter-spacing:0.078px;">Печат на двойните часове като единични</div>
<div class="cb" style="top:391px"></div><div class="cl" style="top:392px;letter-spacing:-0.017px;">Предварително попълнете кратки имена с имена.</div>
<div class="cb" style="top:411px"></div><div class="cl" style="top:412px;letter-spacing:0.058px;">Използвайте английски текстове в програмата.</div>
<div class="cb" style="top:487px"></div><div class="cl" style="top:488px;letter-spacing:0.010px;">Използвайте капацитета на помещенията</div>
<div class="cb" style="top:510px"><svg width="11" height="11" viewBox="0 0 11 11" style="position:absolute;left:0;top:0"><path d="M1.5 5.5l2.8 2.8L9.6 2.2" fill="none" stroke="#000" stroke-width="1.1"/></svg></div><div class="cl" style="top:511px;letter-spacing:0.043px;">Покажи норматив на учителя, когато се избира за определен час</div>
<div class="cb" style="top:531px"><svg width="11" height="11" viewBox="0 0 11 11" style="position:absolute;left:0;top:0"><path d="M1.5 5.5l2.8 2.8L9.6 2.2" fill="none" stroke="#000" stroke-width="1.1"/></svg></div><div class="cl" style="top:532px;letter-spacing:-0.065px;">Използваме също и номера за предмети, ученици...</div>
<div class="cb" style="top:552px"></div><div class="cl" style="top:553px;letter-spacing:-0.096px;">Използвайте имена на учебни часове</div>
<div class="cb" style="top:572px"><svg width="11" height="11" viewBox="0 0 11 11" style="position:absolute;left:0;top:0"><path d="M1.5 5.5l2.8 2.8L9.6 2.2" fill="none" stroke="#000" stroke-width="1.1"/></svg></div><div class="cl" style="top:573px;letter-spacing:0.001px;">Разрешете опция за стриктно генериране</div>
<div class="cb" style="top:593px"></div><div class="cl" style="top:594px;letter-spacing:0.013px;">Покажи пълното име на учителя в заглавния ред</div>
<div class="cl" style="left:309px;top:361px">Име формат</div>
<div class="combo" style="left:450px;top:355px;width:348px;padding-left:3.5px;letter-spacing:-0.252px;">[Фамилия] [Име]<svg width="9" height="6" viewBox="0 0 9 6" style="position:absolute;right:3.3px;top:7px"><path d="M.5.7L4.5 4.7l4-4" fill="none" stroke="#404040" stroke-width="1.1"/></svg></div>
<div class="a" style="left:263px;top:426px;width:548px;height:57px;border:3px solid #e81123"></div>
<div class="cl" style="left:268px;top:432px">Общи настройки</div>
<div class="combo" style="left:309px;top:454px;width:491px;padding-left:2.5px;line-height:21px;letter-spacing:-0.064px;">Разписание, базирано на избора на учениците (Майстор)<svg width="9" height="6" viewBox="0 0 9 6" style="position:absolute;right:3.3px;top:7px"><path d="M.5.7L4.5 4.7l4-4" fill="none" stroke="#404040" stroke-width="1.1"/></svg></div>
<div class="a" style="left:904px;top:230px;width:16px;height:439px;background:#f0f0f0"></div>
<div class="a" style="left:904px;top:388px;width:15px;height:230px;background:#cdcdcd"></div>
<svg class="a" style="left:907.5px;top:235.5px" width="8" height="7" viewBox="0 0 8 7"><path d="M.7 5.6L4 2 7.3 5.6" fill="none" stroke="#505050" stroke-width="2"/></svg>
<svg class="a" style="left:907.5px;top:655.5px" width="8" height="7" viewBox="0 0 8 7"><path d="M.7 1.4L4 5 7.3 1.4" fill="none" stroke="#505050" stroke-width="2"/></svg>
<div class="a" style="left:258px;top:669px;width:646px;height:15px;background:#f0f0f0"></div>
<div class="a" style="left:275px;top:669px;width:601px;height:15px;background:#cdcdcd"></div>
<svg class="a" style="left:262.5px;top:672.4px" width="7" height="8" viewBox="0 0 7 8"><path d="M5.6 .7L2 4 5.6 7.3" fill="none" stroke="#505050" stroke-width="2"/></svg>
<svg class="a" style="left:890.5px;top:672.4px" width="7" height="8" viewBox="0 0 7 8"><path d="M1.4 .7L5 4 1.4 7.3" fill="none" stroke="#505050" stroke-width="2"/></svg>
<div class="btn" style="left:713px;border:2px solid #0078d7"></div>
<div class="btn" style="left:785px"></div>
<div class="btn" style="left:857px;background:#cccccc;border-color:#bfbfbf"></div>
<div class="cl" style="left:737.8px;top:699px;letter-spacing:-0.947px;">OK</div>
<div class="cl" style="left:800.3px;top:699px;letter-spacing:-0.307px;">Cancel</div>
<div class="cl" style="left:874.9px;top:699px;color:#838383;letter-spacing:-0.263px;">Apply</div>
<svg class="a" style="left:915px;top:711px" width="11" height="9" viewBox="0 0 11 9"><rect x="8" y="0" width="2" height="2" fill="#b8b8b8"/><rect x="5" y="3" width="2" height="2" fill="#b8b8b8"/><rect x="8" y="3" width="2" height="2" fill="#b8b8b8"/><rect x="2" y="6" width="2" height="2" fill="#b8b8b8"/><rect x="5" y="6" width="2" height="2" fill="#b8b8b8"/><rect x="8" y="6" width="2" height="2" fill="#b8b8b8"/></svg>
</body></html>
